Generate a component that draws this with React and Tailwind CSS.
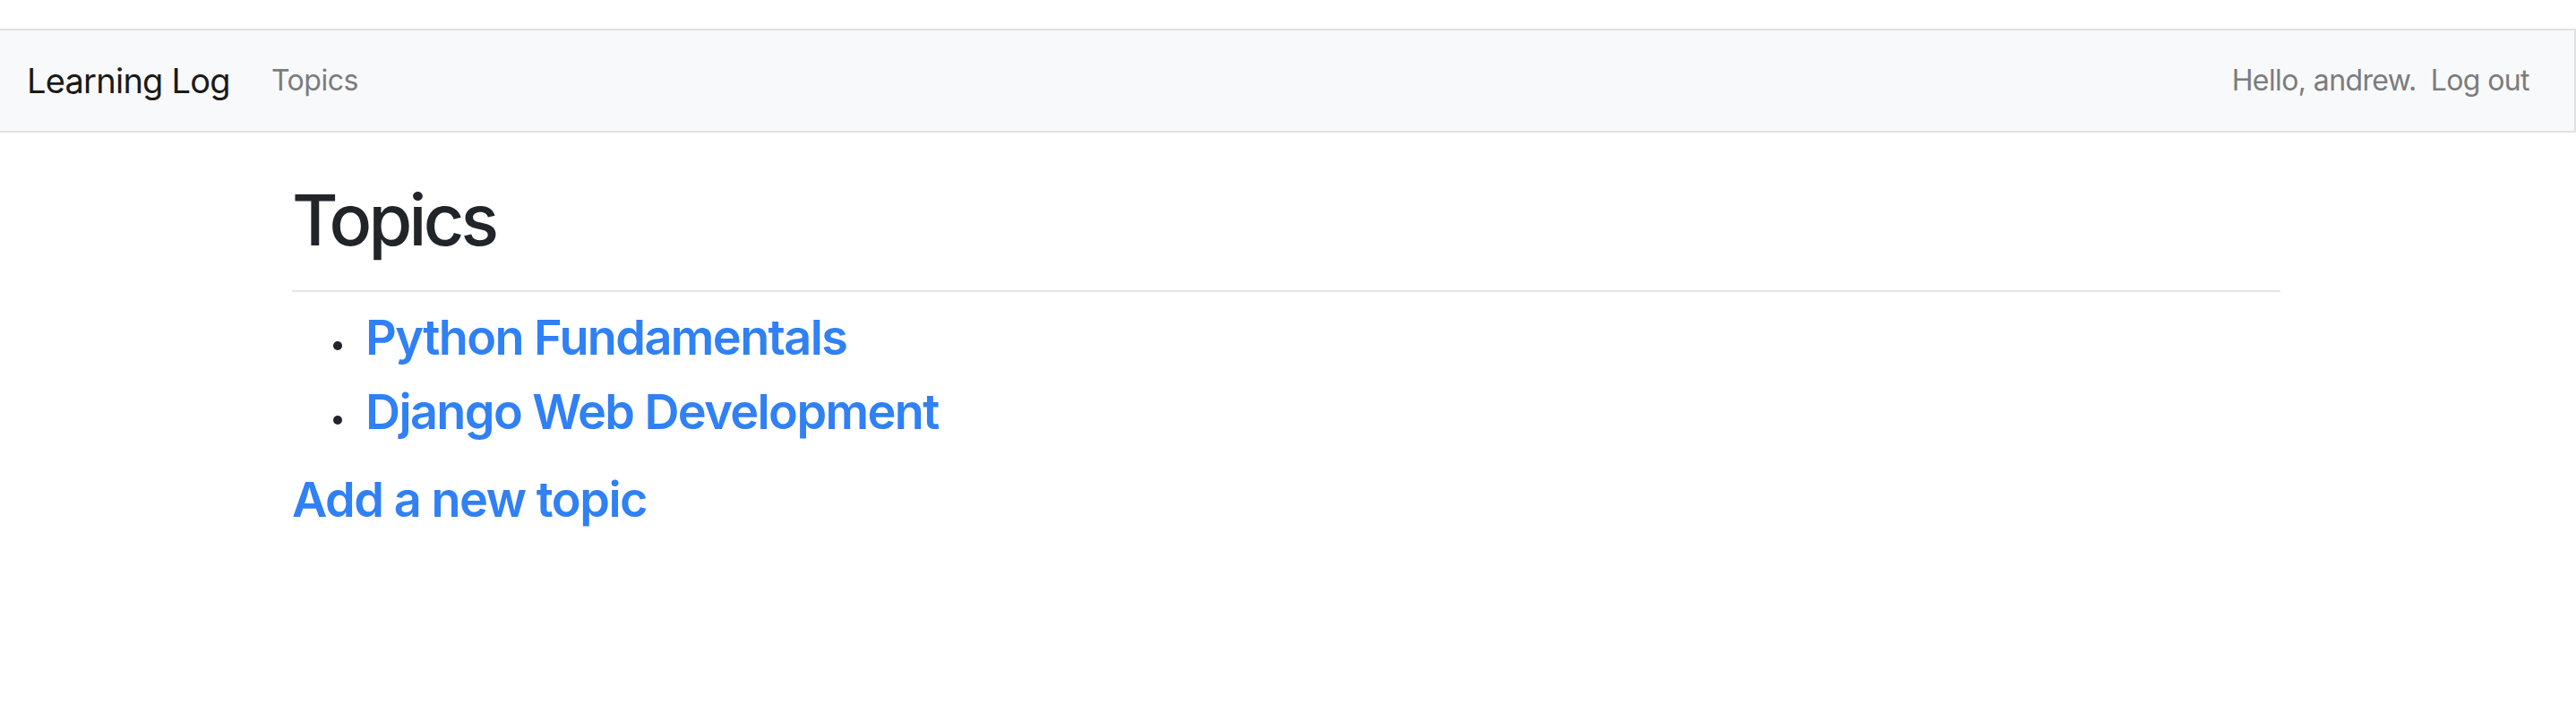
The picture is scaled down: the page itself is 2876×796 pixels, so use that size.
import React from "react";

const topics = ["Python Fundamentals", "Django Web Development"];

export default function App() {
  return (
    <div className="min-h-screen bg-white font-['Inter','Liberation_Sans',sans-serif] text-[#212529]">
      {/* navbar */}
      <nav className="mt-[32px] h-[116px] flex items-center justify-between bg-[#f8f9fa] border-y-2 border-r-2 border-[#dfe1e5] pl-[30px] pr-[50px]">
        <div className="flex items-center">
          <a href="#" className="text-[38px] leading-none tracking-[-0.75px] text-[#1a1a1a]">
            Learning Log
          </a>
          <a href="#" className="ml-[46px] text-[32px] leading-none tracking-[-0.5px] text-[#7b7c7d]">
            Topics
          </a>
        </div>
        <div className="flex items-center text-[32px] leading-none tracking-[-0.6px] text-[#7b7c7d]">
          <span>Hello, andrew.</span>
          <a href="#" className="ml-[16px]">
            Log out
          </a>
        </div>
      </nav>

      {/* page */}
      <main className="w-[2220px] ml-[326px]">
        <div className="mt-[49px] pb-[31px] border-b-2 border-[#e3e5e8]">
          <h1 className="text-[79px] leading-[96px] font-[550] tracking-[-3.8px]">Topics</h1>
        </div>

        <ul className="mt-[18px] pl-[46px]">
          {topics.map((t) => (
            <li key={t} className="flex mb-[18px]">
              <span className="mt-[37px] w-[10px] h-[10px] rounded-full bg-[#212529] shrink-0" />
              <a href="#" className="ml-[26px] text-[54px] leading-[65px] font-semibold tracking-[-1.6px] text-[#3080f6]">
                {t}
              </a>
            </li>
          ))}
        </ul>

        <a href="#" className="block mt-[33px] text-[54px] leading-[65px] font-semibold tracking-[-1.45px] text-[#3080f6]">
          Add a new topic
        </a>
      </main>
    </div>
  );
}
